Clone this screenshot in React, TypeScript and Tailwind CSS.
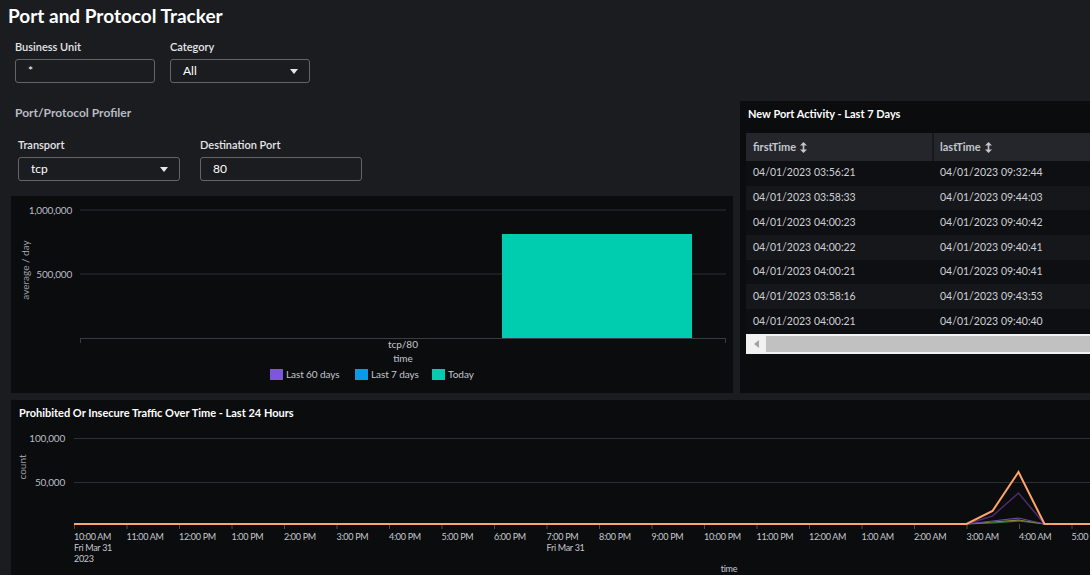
import React from 'react';

const rows = [
  ['04/01/2023 03:56:21', '04/01/2023 09:32:44'],
  ['04/01/2023 03:58:33', '04/01/2023 09:44:03'],
  ['04/01/2023 04:00:23', '04/01/2023 09:40:42'],
  ['04/01/2023 04:00:22', '04/01/2023 09:40:41'],
  ['04/01/2023 04:00:21', '04/01/2023 09:40:41'],
  ['04/01/2023 03:58:16', '04/01/2023 09:43:53'],
  ['04/01/2023 04:00:21', '04/01/2023 09:40:40'],
];

const hours = [
  '10:00 AM', '11:00 AM', '12:00 PM', '1:00 PM', '2:00 PM', '3:00 PM', '4:00 PM', '5:00 PM', '6:00 PM',
  '7:00 PM', '8:00 PM', '9:00 PM', '10:00 PM', '11:00 PM', '12:00 AM', '1:00 AM', '2:00 AM', '3:00 AM',
  '4:00 AM', '5:00 AM',
];

const Caret = () => (
  <svg width="8" height="5" viewBox="0 0 8 5" className="shrink-0">
    <path d="M0 0 L8 0 L4 5 Z" fill="#e6e7ea" />
  </svg>
);

const SortIcon = () => (
  <svg width="7" height="11" viewBox="0 0 7 11" className="ml-[4px]">
    <path d="M3.5 0 L7 3.5 L0 3.5 Z M3.5 11 L7 7.5 L0 7.5 Z" fill="#c3c6cc" />
    <rect x="2.7" y="3" width="1.6" height="5" fill="#c3c6cc" />
  </svg>
);

const Field: React.FC<{ label: string; value: string; width: string; select?: boolean }> = ({ label, value, width, select }) => (
  <div className={`flex flex-col ${width}`}>
    <div className="h-[14px] leading-[14px] text-[11px] font-semibold text-[#e4e6e9] mb-[5px]">{label}</div>
    <div className="h-[24px] rounded-[3px] border border-[#62656c] bg-[#1b1c20] flex items-center justify-between pl-[12px] pr-[11px] text-[12px] text-white">
      <span>{value}</span>
      {select && <Caret />}
    </div>
  </div>
);

const tick = { fontSize: 9, letterSpacing: -0.3, fill: '#c3c7cd' };

const BarChart = () => (
  <svg width="722" height="197" className="block">
    <line x1="69" y1="14" x2="715" y2="14" stroke="#2c2e33" />
    <line x1="69" y1="78" x2="715" y2="78" stroke="#2c2e33" />
    <text x="61" y="17.5" textAnchor="end" fontSize="10" letterSpacing="-0.2" fill="#b9bdc3">1,000,000</text>
    <text x="61" y="81.5" textAnchor="end" fontSize="10" letterSpacing="-0.2" fill="#b9bdc3">500,000</text>
    <text x="0" y="0" transform="translate(18 74) rotate(-90)" textAnchor="middle" fontSize="10" fill="#9a9ea5">average / day</text>
    <rect x="491" y="38" width="190" height="104" fill="#00cdaf" />
    <line x1="69" y1="142.5" x2="715" y2="142.5" stroke="#3a3c42" />
    <line x1="69.5" y1="142" x2="69.5" y2="147" stroke="#3a3c42" />
    <line x1="714.5" y1="142" x2="714.5" y2="147" stroke="#3a3c42" />
    <text x="392" y="152" textAnchor="middle" fontSize="10" fill="#c3c7cd">tcp/80</text>
    <text x="392" y="166" textAnchor="middle" fontSize="10" fill="#c3c7cd">time</text>
    <rect x="259" y="173" width="13" height="11" fill="#7e56d8" />
    <text x="275" y="182" fontSize="10" letterSpacing="-0.1" fill="#c3c7cd">Last 60 days</text>
    <rect x="344" y="173" width="13" height="11" fill="#0b9be6" />
    <text x="360" y="182" fontSize="10" letterSpacing="-0.1" fill="#c3c7cd">Last 7 days</text>
    <rect x="421" y="173" width="13" height="11" fill="#00cdaf" />
    <text x="437" y="182" fontSize="10" fill="#c3c7cd">Today</text>
  </svg>
);

const LineChart = () => {
  const x0 = 63;
  const step = 52.5;
  const end = 1079;
  const x3 = x0 + step * 17;
  return (
    <svg width="1079" height="175" className="block">
      <line x1={x0} y1="38.5" x2={end} y2="38.5" stroke="#2c2e33" />
      <line x1={x0} y1="82.5" x2={end} y2="82.5" stroke="#2c2e33" />
      <text x="54" y="42" textAnchor="end" fontSize="10" letterSpacing="-0.2" fill="#b9bdc3">100,000</text>
      <text x="54" y="86" textAnchor="end" fontSize="10" letterSpacing="-0.2" fill="#b9bdc3">50,000</text>
      <text x="0" y="0" transform="translate(15 67) rotate(-90)" textAnchor="middle" fontSize="10" fill="#9a9ea5">count</text>
      {hours.map((h, i) => (
        <g key={h + i}>
          <line x1={x0 + step * i + 0.5} y1="124" x2={x0 + step * i + 0.5} y2="129" stroke="#4a4c52" />
          <text x={x0 + step * i} y="140" {...tick}>{i === 19 ? '5:00' : h}</text>
        </g>
      ))}
      <text x={x0} y="151" {...tick}>Fri Mar 31</text>
      <text x={x0} y="162" {...tick}>2023</text>
      <text x={x0 + step * 9} y="151" {...tick}>Fri Mar 31</text>
      <text x="718" y="172" textAnchor="middle" {...tick}>time</text>
      <polyline points={`${x3},124 ${x3 + 26},123 ${x3 + 52},121 ${x3 + 78},124`} fill="none" stroke="#2f7a5a" strokeWidth="1.2" />
      <polyline points={`${x3},124 ${x3 + 26},122 ${x3 + 52},120 ${x3 + 78},124`} fill="none" stroke="#8a8a2e" strokeWidth="1.2" />
      <polyline points={`${x3},124 ${x3 + 26},121 ${x3 + 52},118 ${x3 + 78},124`} fill="none" stroke="#6a48a8" strokeWidth="1.2" />
      <polyline points={`${x3},124 ${x3 + 26},116 ${x3 + 52},93 ${x3 + 78},124`} fill="none" stroke="#4e2a6e" strokeWidth="1.5" />
      <polyline
        points={`${x0},124 ${x3},124 ${x3 + 26},111 ${x3 + 52},72 ${x3 + 78},124 ${end},124`}
        fill="none"
        stroke="#ffa46b"
        strokeWidth="2"
        strokeLinejoin="miter"
      />
    </svg>
  );
};

export default function App() {
  return (
    <div className="w-[1090px] h-[575px] overflow-hidden bg-[#1b1c20] text-white" style={{ fontFamily: 'Lato, "Liberation Sans", sans-serif' }}>
      <h1 className="h-[31px] pl-[8px] pt-[5px] text-[19px] leading-[22px] font-bold">Port and Protocol Tracker</h1>

      {/* global filters */}
      <div className="mt-[9px] pl-[15px] flex gap-[15px]">
        <Field label="Business Unit" value="*" width="w-[140px]" />
        <Field label="Category" value="All" width="w-[140px]" select />
      </div>

      <div className="mt-[18px] pl-[11px] flex gap-[7px] h-[292px]">
        {/* left column */}
        <div className="w-[722px] shrink-0 flex flex-col">
          <div className="pl-[4px] pt-[5px] h-[19px] leading-[14px] text-[12px] font-bold text-[#b7bbc2]">Port/Protocol Profiler</div>
          <div className="mt-[18px] pl-[7px] flex gap-[20px]">
            <Field label="Transport" value="tcp" width="w-[162px]" select />
            <Field label="Destination Port" value="80" width="w-[162px]" />
          </div>
          <div className="mt-[15px] h-[197px] bg-[#0b0c0e]">
            <BarChart />
          </div>
        </div>

        {/* right panel */}
        <div className="w-[370px] shrink-0 bg-[#0b0c0e] px-[6px]">
          <div className="pl-[2px] pt-[6px] h-[20px] leading-[14px] text-[11px] font-bold text-white">New Port Activity - Last 7 Days</div>
          <div className="mt-[12px] w-[400px]">
            <div className="flex h-[28px] text-[11px] font-bold text-[#c3c6cc]">
              <div className="w-[186px] bg-[#24262b] flex items-center pl-[7px]">firstTime<SortIcon /></div>
              <div className="w-[2px] bg-[#17181c]" />
              <div className="flex-1 bg-[#24262b] flex items-center pl-[6px]">lastTime<SortIcon /></div>
            </div>
            {rows.map((r, i) => (
              <div key={i} className={`flex h-[24.7px] items-center text-[10.5px] text-[#cdd0d5] ${i % 2 === 1 ? 'bg-[#16171b]' : 'bg-[#0e0f12]'}`}>
                <div className="w-[188px] pl-[7px]">{r[0]}</div>
                <div className="flex-1 pl-[6px]">{r[1]}</div>
              </div>
            ))}
            <div className="h-[20px] bg-[#f1f1f1] flex items-center px-[1px]">
              <div className="w-[19px] flex justify-center">
                <svg width="5" height="8" viewBox="0 0 5 8">
                  <path d="M5 0 L0 4 L5 8 Z" fill="#a3a3a3" />
                </svg>
              </div>
              <div className="flex-1 h-[16px] bg-[#c1c1c1]" />
            </div>
          </div>
        </div>
      </div>

      {/* bottom panel */}
      <div className="mt-[7px] ml-[11px] w-[1079px] h-[180px] bg-[#0b0c0e]">
        <div className="pl-[8px] pt-[6px] h-[20px] leading-[14px] text-[11px] font-bold text-white">Prohibited Or Insecure Traffic Over Time - Last 24 Hours</div>
        <div className="-mt-[20px]">
          <LineChart />
        </div>
      </div>
    </div>
  );
}
